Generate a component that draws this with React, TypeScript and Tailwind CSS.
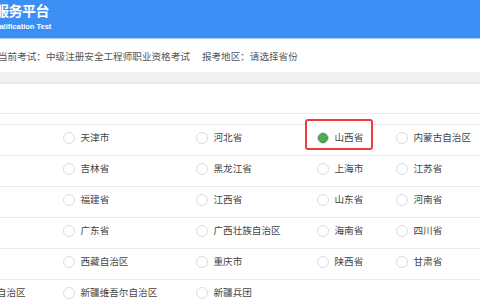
import { useState } from 'react';

const rows: string[][] = [
  ['北京市', '天津市', '河北省', '山西省', '内蒙古自治区'],
  ['辽宁省', '吉林省', '黑龙江省', '上海市', '江苏省'],
  ['安徽省', '福建省', '江西省', '山东省', '河南省'],
  ['湖南省', '广东省', '广西壮族自治区', '海南省', '四川省'],
  ['云南省', '西藏自治区', '重庆市', '陕西省', '甘肃省'],
  ['宁夏回族自治区', '新疆维吾尔自治区', '新疆兵团'],
];

export default function App() {
  const [selected, setSelected] = useState('山西省');

  return (
    <div className="h-[300px] w-[480px] overflow-hidden bg-white font-['Liberation_Sans','Noto_Sans_CJK_SC',sans-serif]">
      {/* Header */}
      <header className="h-[39px] bg-[#3b8ef3] border-b border-[#a9cbf5] text-white">
        <div className="ml-[-5px] pt-[4px] text-[14px] leading-[15px] font-bold tracking-[-0.5px]">服务平台</div>
        <div className="ml-[-11px] mt-[3px] text-[7.5px] leading-[9px] font-bold">Qualification Test</div>
      </header>

      {/* Exam info */}
      <div className="h-[33px] flex items-center text-[9.6px] text-[#555] pt-[3px]">
        <span className="ml-[-2px]">当前考试：中级注册安全工程师职业资格考试</span>
        <span className="ml-[12px]">报考地区：请选择省份</span>
      </div>
      <div className="h-[12px] bg-[#f1f1f1] border-b-2 border-[#e6e7e9]" />

      {/* Province table */}
      <div className="h-[29px]" />
      <div className="h-[11px] border-t border-[#ececec]" />
      <div className="ml-[-59px]">
        {rows.map((row, ri) => (
          <div
            key={ri}
            className="h-[31px] border-t border-[#ececec] grid grid-cols-[122px_133px_121px_79px_1fr]"
          >
            {row.map(name => {
              const active = selected === name;
              return (
                <div key={name} className="relative h-full flex items-center pb-[4px]">
                  {active && (
                    <div className="absolute left-[-12px] top-[-6px] w-[68px] h-[31px] bg-white border-2 border-[#ef3b3b] rounded-[3px]" />
                  )}
                  <button
                    onClick={() => setSelected(name)}
                    className="relative z-10 flex items-center gap-[5.5px] text-[9.6px] text-[#444] whitespace-nowrap"
                  >
                    {active ? (
                      <span className="w-[12px] h-[12px] rounded-full border border-[#d9d9d9] bg-white flex items-center justify-center">
                        <span className="w-[10px] h-[10px] rounded-full bg-[#4caf50] border border-[#3b8a3e]" />
                      </span>
                    ) : (
                      <span className="w-[12px] h-[12px] rounded-full border border-[#dcdcdc] bg-white" />
                    )}
                    <span>{name}</span>
                  </button>
                </div>
              );
            })}
          </div>
        ))}
      </div>
    </div>
  );
}
